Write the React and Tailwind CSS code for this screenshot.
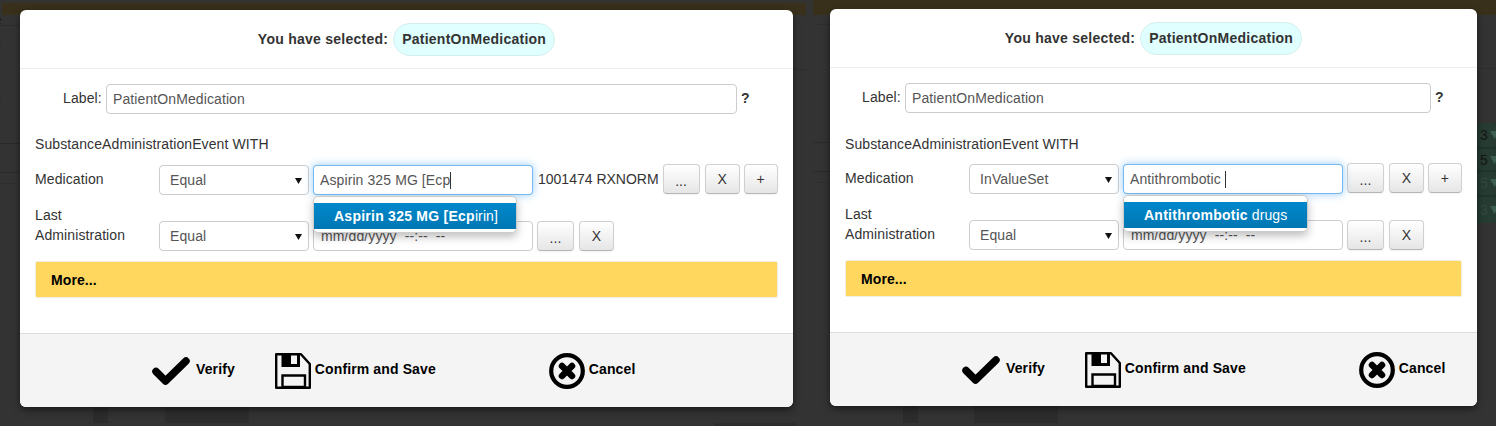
import React from "react";

const F = { fontFamily: '"Liberation Sans", Arial, sans-serif' };

function Caret({ ml = 0 }) {
  return <span className="inline-block w-px h-[17px] bg-[#333]" style={{ marginLeft: ml }} />;
}

function Sel({ text }) {
  return (
    <div className="w-[150px] h-[30px] shrink-0 flex items-center justify-between pl-[10px] pr-[5px] bg-white border border-[#ccc] rounded-[4px] text-[#555]">
      <span>{text}</span>
      <svg width="7" height="7" viewBox="0 0 7 7" className="mr-[1px]"><path d="M0 1h7L3.5 7z" fill="#111" /></svg>
    </div>
  );
}

function Btn({ children, w }) {
  return (
    <div
      className="h-[30px] shrink-0 flex items-center justify-center rounded-[4px] border border-[#d0d0d0] border-b-[#b5b5b5] bg-gradient-to-b from-white to-[#e6e6e6] shadow-[inset_0_1px_0_rgba(255,255,255,0.2),0_1px_2px_rgba(0,0,0,0.05)] text-[#333]"
      style={{ width: w }}
    >
      {children}
    </div>
  );
}

function Check() {
  return (
    <svg width="38" height="28" viewBox="0 0 38 28" className="shrink-0">
      <path d="M4 14.5L13.5 24L34 4" fill="none" stroke="#000" strokeWidth="7.5" strokeLinejoin="round" strokeLinecap="round" />
    </svg>
  );
}

function Floppy() {
  return (
    <svg width="36" height="36" viewBox="0 0 36 36" className="shrink-0">
      <path d="M1.2 1.2H26L34.8 11V34.8H1.2Z" fill="none" stroke="#000" strokeWidth="2.4" strokeLinejoin="round" />
      <path d="M6.5 1.5H25V14H6.5Z" fill="#000" />
      <path d="M16 2.5H22V11H16Z" fill="#f4f4f4" />
      <path d="M7.5 22.5H30V34H7.5Z" fill="none" stroke="#000" strokeWidth="2.4" />
    </svg>
  );
}

function CancelIcon() {
  return (
    <svg width="36" height="36" viewBox="0 0 36 36" className="shrink-0">
      <circle cx="18" cy="18" r="15.8" fill="none" stroke="#000" strokeWidth="4.2" />
      <path d="M13 13L23 23M23 13L13 23" stroke="#000" strokeWidth="6.5" strokeLinecap="round" />
    </svg>
  );
}

function Modal({ width, top, left, labelPl, labelW, op, caretMl, typed, match, rest, menuW, code, textMt }) {
  return (
    <div
      className="bg-white rounded-[6px] shadow-[0_3px_7px_rgba(0,0,0,0.5)] relative shrink-0 text-[14px] leading-[20px] text-[#333] tracking-[0.1px]"
      style={{ ...F, width, marginTop: top, marginLeft: left }}
    >
      <div className="h-[59px] border-b border-[#eee] flex items-center justify-center gap-[5px]">
        <span className="font-bold tracking-[0.25px]">You have selected:</span>
        <span className="h-[33px] flex items-center px-[8px] rounded-full bg-[#e0ffff] border border-[#d4eeee] font-bold tracking-[0.25px]">PatientOnMedication</span>
      </div>

      <div className="px-[15px]">
        <div className="mt-[15px] flex items-center h-[30px]" style={{ paddingLeft: labelPl - 15 }}>
          <span className="w-[43px] -mt-[2px]">Label:</span>
          <div className="h-[30px] flex items-center px-[6px] bg-white border border-[#ccc] rounded-[4px] text-[#555]" style={{ width: labelW }}>PatientOnMedication</div>
          <span className="ml-[4px] font-bold -mt-[2px]">?</span>
        </div>

        <div className="h-[20px]" style={{ marginTop: textMt }}>SubstanceAdministrationEvent WITH</div>

        <div className="flex items-start h-[31px] gap-[4px]" style={{ marginTop: 30 - textMt }}>
          <div className="w-[120px] shrink-0 leading-[30px]">Medication</div>
          <div className="pt-[1px]"><Sel text={op} /></div>
          <div className="relative pt-[1px] shrink-0">
            <div className="w-[220px] h-[30px] flex items-center px-[6px] bg-white border border-[rgba(82,168,236,0.8)] rounded-[4px] text-[#555] shadow-[0_0_8px_rgba(82,168,236,0.6)]">
              <span className="whitespace-pre">{typed}</span>
              <Caret ml={caretMl} />
            </div>
            <div
              className="absolute left-0 top-[32px] h-[37px] pt-[6px] z-10 bg-white border border-[#ccc] rounded-[5px] shadow-[0_4px_8px_rgba(0,0,0,0.25)] overflow-hidden"
              style={{ width: menuW }}
            >
              <div className="h-[26px] flex items-center pl-[20px] text-white bg-gradient-to-b from-[#0088cc] to-[#0077b3] whitespace-pre">
                <b className="tracking-[0.25px]">{match}</b>
                <span>{rest}</span>
              </div>
            </div>
          </div>
          {code && <span className="whitespace-nowrap ml-px leading-[30px] tracking-normal">{code}</span>}
          <Btn w={37}><span className="mt-[4px]">...</span></Btn>
          <div className="ml-px"><Btn w={35}><span>X</span></Btn></div>
          <Btn w={34}>+</Btn>
        </div>

        <div className="mt-[10px] flex items-end h-[46px] gap-[4px]">
          <div className="w-[120px] shrink-0 pb-[6px]">Last<br />Administration</div>
          <Sel text="Equal" />
          <div className="h-[30px] w-[220px] flex items-center px-[7px] bg-white border border-[#ccc] rounded-[4px] text-[#555] whitespace-pre">mm/dd/yyyy  --:--  --</div>
          <Btn w={37}><span className="mt-[4px]">...</span></Btn>
          <div className="ml-px"><Btn w={35}><span>X</span></Btn></div>
        </div>

        <div className="mt-[10px] h-[37px] flex items-center pl-[15px] bg-[#ffd75e] rounded-[2px] border border-[#f1eee0] font-bold text-black tracking-[0.1px]">More...</div>
      </div>

      <div className="mt-[35px] h-[74px] bg-[#f4f4f4] border-t border-[#ddd] rounded-b-[6px] flex items-center pl-[132px] font-bold text-black tracking-[0.12px]">
        <div className="flex items-center gap-[6px]"><Check /><span className="-mt-[3px]">Verify</span></div>
        <div className="flex items-center gap-[4px] ml-[40px]"><Floppy /><span className="-mt-[3px]">Confirm and Save</span></div>
        <div className="flex items-center gap-[4px] ml-[113px]"><CancelIcon /><span className="-mt-[3px]">Cancel</span></div>
      </div>
    </div>
  );
}

function Ghost({ className }) {
  return <div className={`absolute ${className}`} />;
}

function GreenRow({ h, digit, dim }) {
  return (
    <div className="flex items-center gap-[2px] bg-[#263b32] pl-[3px] rounded-[3px]" style={{ height: h }}>
      <span className={dim ? "text-[#2f4a3e]" : "text-[#151515]"}>{digit}</span>
      <svg width="9" height="8" viewBox="0 0 9 8" className="shrink-0"><path d="M0 0h9L4.5 8z" fill="#3d5f52" /></svg>
    </div>
  );
}

export default function App() {
  return (
    <div className="w-[1496px] h-[426px] bg-[#333] overflow-hidden flex" style={F}>
      <div className="relative w-[813px] h-[426px] shrink-0">
        <Ghost className="left-[2px] top-[3px] w-[804px] h-[12px] bg-[#38301a]" />
        <Ghost className="left-0 top-[25px] w-[20px] h-px bg-[#2c2c2c]" />
        <Ghost className="left-0 top-[143px] w-[20px] h-px bg-[#2a2a2a]" />
        <Ghost className="left-0 top-[172px] w-[20px] h-px bg-[#2a2a2a]" />
        <Ghost className="left-0 top-[183px] w-[20px] h-px bg-[#2e2e2e]" />
        <Ghost className="left-[793px] top-[69px] w-[13px] h-px bg-[#2c2c2c]" />
        <Ghost className="left-[93px] top-[407px] w-[15px] h-[16px] bg-[#2c2c2c]" />
        <Ghost className="left-[165px] top-[407px] w-[84px] h-[16px] bg-[#2d2d2d]" />
        <Ghost className="left-[714px] top-[423px] w-[82px] h-[3px] bg-[#2d2d2d]" />
        <div className="absolute left-0 top-0 text-[#1f1f1f] text-[14px] leading-[20px]">
          <div className="h-[10px]" />
          <div className="-ml-[6px]">e</div>
          <div className="-ml-[6px] mt-[4px]">c</div>
          <div className="-ml-[6px] mt-[8px]">t</div>
          <div className="-ml-[6px] mt-[8px]">c</div>
        </div>
        <Modal
          width={773}
          top={10}
          left={20}
          labelPl={43}
          labelW={631}
          op="Equal"
          caretMl={0}
          typed="Aspirin 325 MG [Ecp"
          match="Aspirin 325 MG [Ecp"
          rest="irin]"
          menuW={204}
          code="1001474 RXNORM"
          textMt={20}
        />
      </div>
      <div className="relative w-[683px] h-[426px] shrink-0">
        <Ghost className="left-0 top-0 w-[683px] h-[15px] bg-[#38301a]" />
        <Ghost className="left-0 top-[24px] w-[17px] h-px bg-[#2e2e2e]" />
        <Ghost className="left-0 top-[142px] w-[17px] h-px bg-[#2a2a2a]" />
        <Ghost className="left-0 top-[171px] w-[17px] h-px bg-[#2a2a2a]" />
        <Ghost className="left-0 top-[182px] w-[17px] h-px bg-[#2e2e2e]" />
        <Ghost className="left-[90px] top-[406px] w-[15px] h-[17px] bg-[#2c2c2c]" />
        <Ghost className="left-[161px] top-[406px] w-[84px] h-[17px] bg-[#2d2d2d]" />
        <Ghost className="left-[664px] top-[68px] w-[19px] h-px bg-[#2e2e2e]" />
        <div className="absolute left-[664px] top-[123px] w-[19px] h-[100px] bg-[#20342b] flex flex-col gap-[2px] text-[14px] leading-[20px] overflow-hidden">
          <GreenRow h={25} digit="3" />
          <GreenRow h={21} digit="5" />
          <GreenRow h={23} digit="5" dim />
          <GreenRow h={27} digit="3" dim />
        </div>
        <Modal
          width={647}
          top={9}
          left={17}
          labelPl={32}
          labelW={526}
          op="InValueSet"
          caretMl={4}
          typed="Antithrombotic"
          match="Antithrombotic"
          rest=" drugs"
          menuW={185}
          textMt={21}
        />
      </div>
    </div>
  );
}
